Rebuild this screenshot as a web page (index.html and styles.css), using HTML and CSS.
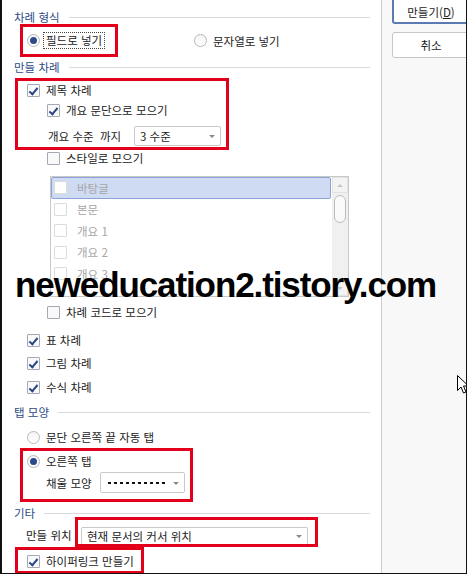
FILE: index.html
```html
<!DOCTYPE html>
<html lang="ko">
<head>
    <meta charset="UTF-8">
    <title>차례 만들기</title>
    <link rel="stylesheet" href="styles.css">
</head>
<body>
    <div class="dialog">
        <div class="pane">
            <div class="group-title">차례 형식</div>
            <div class="format-row">
                <div class="mark mark-format">
                    <span class="radio on"></span><span class="focus">필드로 넣기</span>
                </div>
                <div class="opt opt-string"><span class="radio"></span>문자열로 넣기</div>
            </div>

            <div class="group-title">만들 차례</div>
            <div class="mark mark-title">
                <div class="opt opt-l1"><span class="check on"></span>제목 차례</div>
                <div class="opt opt-l2 opt-gap2"><span class="check on"></span>개요 문단으로 모으기</div>
                <div class="opt opt-level">
                    <span>개요 수준&nbsp;&nbsp;까지</span>
                    <div class="select select-level">3 수준<span class="arrow"></span></div>
                </div>
            </div>
            <div class="opt opt-l2 opt-style"><span class="check"></span>스타일로 모으기</div>

            <div class="listbox">
                <div class="list-items">
                    <div class="list-item selected"><span class="check dim"></span>바탕글</div>
                    <div class="list-item"><span class="check dim"></span>본문</div>
                    <div class="list-item"><span class="check dim"></span>개요 1</div>
                    <div class="list-item"><span class="check dim"></span>개요 2</div>
                    <div class="list-item"><span class="check dim"></span>개요 3</div>
                </div>
                <div class="scrollbar">
                    <div class="scroll-btn"><span class="tri-up"></span></div>
                    <div class="scroll-thumb"></div>
                    <div class="scroll-track"></div>
                    <div class="scroll-btn"><span class="tri-down"></span></div>
                </div>
            </div>

            <div class="opt opt-l2 opt-code"><span class="check"></span>차례 코드로 모으기</div>
            <div class="opt opt-l1 opt-table"><span class="check on"></span>표 차례</div>
            <div class="opt opt-l1 opt-gap5"><span class="check on"></span>그림 차례</div>
            <div class="opt opt-l1 opt-gap6"><span class="check on"></span>수식 차례</div>

            <div class="group-title title-tab">탭 모양</div>
            <div class="opt opt-l1 opt-gap6"><span class="radio"></span>문단 오른쪽 끝 자동 탭</div>
            <div class="mark mark-tab">
                <div class="opt opt-right"><span class="radio on"></span>오른쪽 탭</div>
                <div class="opt opt-fill">
                    <span>채울 모양</span>
                    <div class="select select-fill"><span class="dots"></span><span class="arrow"></span></div>
                </div>
            </div>

            <div class="group-title title-etc">기타</div>
            <div class="place-row">
                <span class="place-label">만들 위치</span>
                <div class="mark mark-place">
                    <div class="select select-place">현재 문서의 커서 위치<span class="arrow"></span></div>
                </div>
            </div>
            <div class="mark mark-link">
                <div class="opt opt-link"><span class="check on"></span>하이퍼링크 만들기</div>
            </div>
        </div>

        <div class="side">
            <button class="btn btn-default">만들기(<u>D</u>)</button>
            <button class="btn">취소</button>
        </div>

        <div class="watermark">neweducation2.tistory.com</div>

        <svg class="cursor" width="12" height="19" viewBox="0 0 12 19">
            <path d="M0.5 0.5 L0.5 15.5 L4 12 L6.5 18 L9 17 L6.5 11 L11.5 11 Z" fill="#fff" stroke="#000" stroke-width="1"/>
        </svg>
    </div>
</body>
</html>
```

FILE: styles.css
```css
* {
    margin: 0;
    padding: 0;
    box-sizing: border-box;
}
body {
    font-family: 'Noto Sans CJK KR', 'Noto Sans', sans-serif;
    font-size: 11.5px;
    color: #222;
    background: #fff;
}
.dialog {
    position: relative;
    width: 467px;
    height: 574px;
    display: flex;
    border-left: 2px solid #111;
    border-right: 1px solid #111;
    border-bottom: 1px solid #111;
    overflow: hidden;
    background: #fff;
}
.pane {
    width: 379px;
    flex-shrink: 0;
    padding: 7px 11px 0 12px;
    display: flex;
    flex-direction: column;
}
.group-title {
    height: 20px;
    display: flex;
    align-items: center;
    gap: 9px;
    color: #2d4b87;
    flex-shrink: 0;
}
.group-title::after {
    content: '';
    flex: 1;
    height: 1px;
    background: #dadada;
}
.title-tab { margin-top: 6px; }
.title-etc { margin-top: 1px; }

.mark {
    border: 3px solid #e3001b;
    flex-shrink: 0;
}
.opt {
    height: 18px;
    display: flex;
    align-items: center;
    white-space: nowrap;
    flex-shrink: 0;
}
.opt-l1 { padding-left: 13px; }
.opt-l2 { padding-left: 33px; }
.opt-gap2 { margin-top: 2px; }
.opt-gap5 { margin-top: 5px; }
.opt-gap6 { margin-top: 6px; }

/* radio & check */
.radio {
    width: 13px;
    height: 13px;
    border-radius: 50%;
    border: 1px solid #b9b9b9;
    background: linear-gradient(#f4f4f4, #fff);
    margin-right: 6px;
    display: flex;
    align-items: center;
    justify-content: center;
    flex-shrink: 0;
}
.radio.on::after {
    content: '';
    width: 7px;
    height: 7px;
    border-radius: 50%;
    background: #2e4a8c;
}
.check {
    width: 13px;
    height: 13px;
    border: 1px solid #a3a9b5;
    background: #f9f9fb;
    border-radius: 1px;
    margin-right: 6px;
    position: relative;
    flex-shrink: 0;
}
.check.on::after {
    content: '';
    position: absolute;
    left: 3px;
    top: 1px;
    width: 3px;
    height: 7px;
    border-right: 2px solid #2b4683;
    border-bottom: 2px solid #2b4683;
    transform: rotate(40deg);
}
.check.dim {
    border-color: #dcdcdc;
    background: #fff;
    margin-right: 10px;
}

/* 차례 형식 */
.format-row {
    margin-top: -3px;
    height: 33px;
    display: flex;
    align-items: center;
    flex-shrink: 0;
}
.mark-format {
    margin-left: 6px;
    width: 98px;
    height: 33px;
    display: flex;
    align-items: center;
    padding-left: 4px;
}
.mark-format .radio { margin-right: 3px; }
.focus {
    height: 17px;
    line-height: 15px;
    padding: 0 2px;
    border: 1px dotted #444;
    white-space: nowrap;
}
.opt-string { margin-left: 76px; }

/* 만들 차례 */
.mark-title {
    margin: 1px 0 0 1px;
    width: 214px;
    height: 72px;
}
.mark-title .opt-l1 { padding-left: 9px; }
.mark-title .opt-l2 { padding-left: 29px; }
.opt-level {
    margin-top: 7px;
    height: 20px;
    padding-left: 30px;
}
.select {
    position: relative;
    height: 20px;
    border: 1px solid #c9c9c9;
    border-radius: 2px;
    background: #fff;
    display: flex;
    align-items: center;
    padding-left: 5px;
    white-space: nowrap;
}
.arrow {
    position: absolute;
    right: 5px;
    top: 50%;
    margin-top: -1px;
    border-left: 3px solid transparent;
    border-right: 3px solid transparent;
    border-top: 3px solid #8a8a8a;
}
.select-level {
    width: 87px;
    margin-left: auto;
    margin-right: 5px;
}
.opt-style { margin-top: -1px; }

/* list */
.listbox {
    margin: 9px 0 0 36px;
    width: 299px;
    height: 121px;
    border: 1px solid #c8c8c8;
    display: flex;
    overflow: hidden;
    flex-shrink: 0;
}
.list-items {
    flex: 1;
    overflow: hidden;
}
.list-item {
    height: 21.5px;
    display: flex;
    align-items: center;
    padding-left: 2px;
    margin-right: 1px;
    border: 1px solid transparent;
    color: #a6a6a6;
}
.list-item.selected {
    background: #cfdbf3;
    border-color: #8aa3d6;
    border-radius: 2px;
}
.scrollbar {
    width: 16px;
    background: #f0f0f0;
    display: flex;
    flex-direction: column;
}
.scroll-btn {
    height: 16px;
    display: flex;
    align-items: center;
    justify-content: center;
    border: 1px solid #e2e2e2;
    background: #f3f3f3;
}
.tri-up {
    border-left: 3px solid transparent;
    border-right: 3px solid transparent;
    border-bottom: 3px solid #c6c6c6;
}
.tri-down {
    border-left: 3px solid transparent;
    border-right: 3px solid transparent;
    border-top: 3px solid #c6c6c6;
}
.scroll-thumb {
    margin: 2px 2px 0;
    height: 28px;
    border: 1px solid #bdbdbd;
    border-radius: 6px;
    background: #f9f9f9;
}
.scroll-track { flex: 1; }

.opt-code { margin-top: 6px; }
.opt-table { margin-top: 10px; }

/* 탭 모양 */
.mark-tab {
    margin: 2px 0 0 6px;
    width: 173px;
    height: 54px;
}
.opt-right {
    margin-top: 1px;
    padding-left: 4px;
}
.opt-fill {
    margin-top: 2px;
    height: 21px;
    padding-left: 23px;
}
.select-fill {
    width: 85px;
    height: 21px;
    margin-left: auto;
    margin-right: 5px;
    padding-left: 7px;
}
.dots {
    width: 60px;
    height: 2px;
    background: repeating-linear-gradient(90deg, #111 0 3px, transparent 3px 6px);
}

/* 기타 */
.place-row {
    margin-top: -6px;
    height: 30px;
    display: flex;
    align-items: flex-end;
    flex-shrink: 0;
}
.place-label {
    width: 61px;
    padding-left: 12px;
    height: 17px;
    line-height: 17px;
    margin-bottom: 3px;
    white-space: nowrap;
}
.mark-place {
    width: 243px;
    height: 30px;
    padding: 7px 0 0 3px;
}
.select-place {
    width: 227px;
    height: 17px;
    border-bottom: none;
    border-radius: 2px 2px 0 0;
}
.mark-link {
    margin-left: 1px;
    width: 129px;
    height: 27px;
}
.opt-link {
    margin-top: 2px;
    padding-left: 9px;
}

/* side */
.side {
    flex: 1;
    border-left: 1px solid #cdcdcd;
    background: #f8f8f8;
    padding-left: 10px;
    overflow: hidden;
    display: flex;
    flex-direction: column;
}
.btn {
    width: 78px;
    flex-shrink: 0;
    border: 1px solid #c6c6c6;
    border-radius: 3px;
    background: #fff;
    font-family: inherit;
    font-size: 11.5px;
    color: #222;
    margin-top: 8px;
    height: 26px;
    padding-right: 0;
}
.btn-default {
    margin-top: -6px;
    height: 30px;
    padding-top: 6px;
    border: 2px solid #5b79b3;
}

.watermark {
    position: absolute;
    left: 13px;
    top: 267px;
    font-family: 'Liberation Sans', Arial, sans-serif;
    font-weight: bold;
    font-size: 35px;
    line-height: 35px;
    letter-spacing: -1.1px;
    color: #000;
    white-space: nowrap;
}
.cursor {
    position: absolute;
    left: 455px;
    top: 375px;
}
```
